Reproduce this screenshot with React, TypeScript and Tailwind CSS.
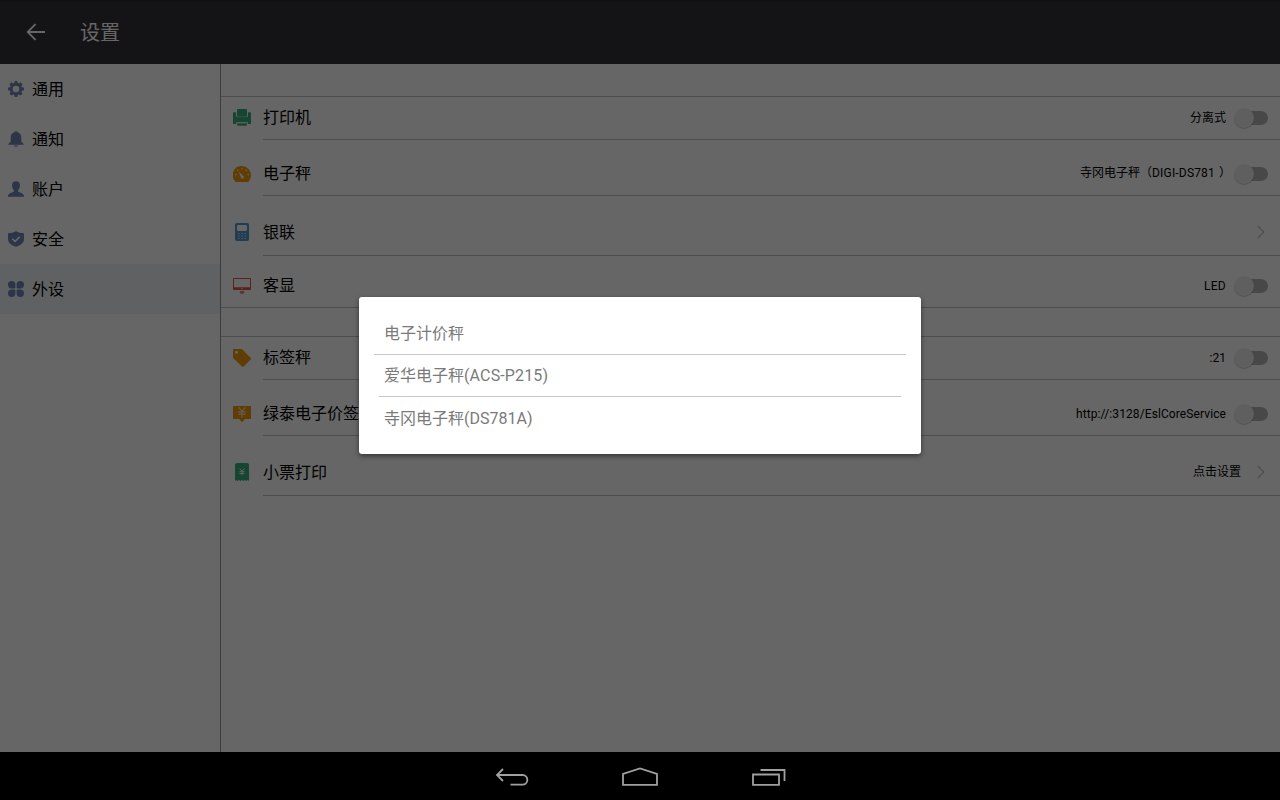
import React from "react";

const GeneralIcon = () => (
  <svg width="16" height="16" viewBox="0 0 16 16" fill="#7186b4">
    <path
      fillRule="evenodd"
      d="M6.7 0h2.6l.4 2 1.2.5 1.8-1.2 1.9 1.9-1.2 1.8.5 1.2 2.1.4v2.7l-2.1.4-.5 1.2 1.2 1.8-1.9 1.9-1.8-1.2-1.2.5-.4 2.1H6.700l-.4-2.100-1.200-.5-1.800 1.200-1.900-1.900 1.200-1.800-.5-1.200L0 9.300V6.600l2.100-.4.500-1.200-1.200-1.800 1.900-1.900 1.800 1.200 1.200-.5zM8 4.700a3.300 3.300 0 1 0 0 6.600 3.300 3.300 0 0 0 0-6.600z"
    />
  </svg>
);
const BellIcon = () => (
  <svg width="16" height="16" viewBox="0 0 16 16" fill="#7186b4">
    <path d="M7 1a1 1 0 0 1 2 0c2.700.5 4.300 2.500 4.300 5.200v4.200l2.400 2.500v.8H.3v-.8l2.400-2.500V6.200C2.700 3.500 4.300 1.500 7 1zM5.800 14.400h4.400c-.4.900-1.200 1.400-2.200 1.400s-1.800-.5-2.200-1.400z" />
  </svg>
);
const UserIcon = () => (
  <svg width="16" height="16" viewBox="0 0 16 16" fill="#7186b4">
    <path d="M8 .2c2.500 0 4 1.600 4 3.900 0 2.200-.8 4.200-1.900 5.100v1.200c.6.900 5.900 1.900 5.900 4.200v1.200H0v-1.200c0-2.300 5.300-3.300 5.900-4.200V9.200C4.800 8.300 4 6.300 4 4.100 4 1.800 5.500.2 8 .2z" />
  </svg>
);
const ShieldIcon = () => (
  <svg width="16" height="16" viewBox="0 0 16 16">
    <path d="M8 .2c2.200 1.200 4.800 1.900 8 2v6c0 3.700-3.400 5.900-8 7.600C3.400 14.100 0 11.900 0 8.200v-6c3.200-.1 5.800-.8 8-2z" fill="#7186b4" />
    <path d="M4.300 7.800l2.700 2.600 4.700-4.500" fill="none" stroke="#fff" strokeWidth="1.500" />
  </svg>
);
const DevicesIcon = () => (
  <svg width="16" height="16" viewBox="0 0 16 16" fill="#7186b4">
    <path d="M3.700 0a3.700 3.700 0 0 1 3.700 3.700v2.500c0 .8-.4 1.200-1.200 1.200H3.700A3.700 3.700 0 0 1 3.700 0zM12.300 0a3.700 3.700 0 0 1 0 7.400H9.800c-.8 0-1.200-.4-1.200-1.200V3.700A3.700 3.700 0 0 1 12.300 0zM3.700 8.600h2.500c.8 0 1.200.4 1.200 1.200v2.500a3.700 3.700 0 1 1-3.700-3.700zM9.800 8.600h2.500a3.700 3.700 0 1 1-3.700 3.700V9.800c0-.8.4-1.200 1.200-1.200z" />
  </svg>
);

const PrinterIcon = () => (
  <svg width="18" height="18" viewBox="0 0 18 18">
    <path d="M1 3.200h1.200c.6 0 1 .4 1 1V7.500h11.600V4.200c0-.6.4-1 1-1H17c.6 0 1 .4 1 1V14c0 .6-.4 1-1 1h-2.200v-1.800H3.200V15H1c-.6 0-1-.4-1-1V4.200c0-.6.4-1 1-1z" fill="#3aad82" />
    <path d="M5 0h8c.6 0 1 .4 1 1v6c0 .5-.4.900-.9.900H4.900A.9.900 0 0 1 4 7V1c0-.6.400-1 1-1z" fill="#3aad82" />
    <path d="M4 14.200h10V15.600c0 .7-.5 1.200-1.200 1.200H5.200c-.7 0-1.200-.5-1.200-1.200z" fill="#3aad82" />
    <path d="M3.600 3.500v4.300h10.800V3.500M3.200 13.600h11.600" fill="none" stroke="#fff" strokeOpacity=".55" strokeWidth=".7" />
  </svg>
);
const GaugeIcon = () => (
  <svg width="18" height="18" viewBox="0 0 18 18">
    <path d="M9 1a9 9 0 0 1 9 9c0 2.600-.8 4.700-2.300 6.400-.4.400-.8.600-1.400.6H3.700c-.6 0-1-.2-1.400-.6A9 9 0 0 1 9 1z" fill="#f29a11" />
    <path d="M5.700 6.800l4.500 4.200a1.400 1.400 0 1 1-2.200 1.400z" fill="#fff" />
    <g fill="#fff" fillOpacity=".85">
      <circle cx="9" cy="3.700" r=".8" />
      <circle cx="4.700" cy="5.400" r=".8" />
      <circle cx="13.300" cy="5.400" r=".8" />
      <circle cx="2.800" cy="9.600" r=".8" />
      <circle cx="15.200" cy="9.600" r=".8" />
    </g>
  </svg>
);
const TerminalIcon = () => (
  <svg width="18" height="18" viewBox="0 0 18 18">
    <rect x="2" y="0" width="14" height="18" rx="2" fill="#529acd" />
    <rect x="4" y="2" width="10" height="6" rx="1.200" fill="#fff" />
    <g fill="#fff" fillOpacity=".7">
      <path d="M5 10h1.500v1H5zM8.250 10h1.500v1h-1.500zM11.500 10H13v1h-1.500zM5 12.500h1.500v1H5zM8.250 12.500h1.500v1h-1.500zM11.500 12.500H13v1h-1.500zM5 15h1.500v1H5zM8.250 15h1.500v1h-1.500zM11.500 15H13v1h-1.500z" />
    </g>
  </svg>
);
const MonitorIcon = () => (
  <svg width="18" height="18" viewBox="0 0 18 18" fill="#dc5946">
    <path fillRule="evenodd" d="M.8 1h16.400c.5 0 .8.300.8.800v10.400c0 .5-.3.800-.8.800H.8c-.5 0-.8-.3-.8-.8V1.800C0 1.300.3 1 .8 1zM1 2v8.300h16V2zM8.300 11.200h1.400v.9H8.300z" />
    <path d="M6.800 14.200h4.400v1.400H6.800z" />
    <path d="M7.200 15.600h3.600v1.200H7.200z" fillOpacity=".7" />
  </svg>
);
const TagIcon = () => (
  <svg width="18" height="18" viewBox="0 0 18 18" fill="#f29a11">
    <path fillRule="evenodd" d="M1 0h7.300c.4 0 .7.100 1 .4l8.300 8.300c.6.600.6 1.200 0 1.800l-6.800 6.900c-.6.600-1.200.6-1.800 0L.4 9.300A1.300 1.300 0 0 1 0 8.300V1c0-.6.4-1 1-1zm2.500 1.700a1.500 1.500 0 1 0 0 3 1.500 1.500 0 0 0 0-3z" />
  </svg>
);
const PriceIcon = () => (
  <svg width="18" height="18" viewBox="0 0 18 18">
    <path d="M0 1h18v13h-6.200L9 17.200 6.200 14H0z" fill="#f29a11" />
    <path d="M5.800 2.500L9 6.300l3.200-3.800M9 6.300v6.500M5.300 7h7.400M5.300 9.400h7.400" fill="none" stroke="#f5deb8" strokeWidth="1.300" />
  </svg>
);
const ReceiptIcon = () => (
  <svg width="18" height="18" viewBox="0 0 18 18">
    <path d="M4 0h10c1.200 0 2 .8 2 2v16l-1.200-1-1.300 1-1.500-1-1.500 1L9 17l-1.500 1L6 17l-1.500 1-1.300-1L2 18V2C2 .8 2.800 0 4 0z" fill="#3aad82" />
    <path d="M6.700 5.500L9 8.200l2.300-2.700M9 8.200v4M6.500 8.700h5M6.500 10.500h5" fill="none" stroke="#e4f4ee" strokeWidth="1" />
  </svg>
);

const Toggle = () => (
  <span className="relative block h-[22px] w-[34px]">
    <span className="absolute top-1 right-0 h-3.5 w-[28px] rounded-full bg-[#b5b5b5]" />
    <span className="absolute top-[1px] left-0 h-5 w-5 rounded-full bg-[#eeeeee] shadow-[0_1px_1px_rgba(0,0,0,0.2)]" />
  </span>
);
const Chevron = () => (
  <svg width="8" height="14" viewBox="0 0 8 14" fill="none" stroke="#bebebe" strokeWidth="1.100">
    <path d="M.8 1l6 6-6 6" />
  </svg>
);

const menu = [
  { label: "通用", icon: <GeneralIcon /> },
  { label: "通知", icon: <BellIcon /> },
  { label: "账户", icon: <UserIcon /> },
  { label: "安全", icon: <ShieldIcon /> },
  { label: "外设", icon: <DevicesIcon />, active: true },
];

type RowProps = {
  icon: React.ReactNode;
  label: string;
  value?: React.ReactNode;
  size: string;
  shift?: string;
  valueShift?: string;
  link?: boolean;
  full?: boolean;
};

function Row({ icon, label, value, size, shift = "pt-px", valueShift = "pb-px", link, full }: RowProps) {
  return (
    <div className={`flex pl-3 ${size} ${full ? "border-b border-[#c3c3c3]" : ""}`}>
      <div className="flex w-[30px] shrink-0 items-center">{icon}</div>
      <div className="flex flex-1 items-center">
        <span className={`flex-1 text-base leading-5 ${shift}`}>{label}</span>
        {value && (
          <span className={`text-xs leading-4 whitespace-pre ${valueShift} ${link ? "mr-4" : "mr-2"}`}>{value}</span>
        )}
        <span className={link ? "mr-[15px]" : "mr-3"}>{link ? <Chevron /> : <Toggle />}</span>
      </div>
    </div>
  );
}

const Line = () => <div className="ml-[42px] h-px bg-[#c3c3c3]" />;

const scaleModel = (
  <>
    （<span className="tracking-[0.015em]">DIGI-DS781</span>
    <span className="-mr-[5px] ml-1">）</span>
  </>
);

export default function App() {
  return (
    <div className="relative flex h-[800px] w-[1280px] flex-col overflow-hidden bg-white font-['Roboto','Noto_Sans_CJK_SC',sans-serif] text-black">
      <header className="flex h-16 shrink-0 items-center border-t-2 border-[#2a2a2d] bg-[#333338] pb-0.5 pl-[26px] text-white">
        <svg width="20" height="18" viewBox="0 0 20 18" fill="none" stroke="#fff" strokeWidth="1.800">
          <path d="M19 9H2M9.500 1.200L1.700 9l7.800 7.800" />
        </svg>
        <h1 className="ml-[34px] pt-0.5 text-[20px] leading-6">设置</h1>
      </header>

      <main className="flex min-h-0 flex-1">
        <nav className="w-[221px] shrink-0 border-r border-[#999]">
          {menu.map((m) => (
            <div key={m.label} className={`flex h-[50px] items-center gap-2 pl-2 ${m.active ? "bg-[#f0f3f6]" : ""}`}>
              {m.icon}
              <span className="pt-0.5 text-base leading-5">{m.label}</span>
            </div>
          ))}
        </nav>

        <section className="flex-1">
          <div className="h-8" />
          <div className="h-px bg-[#c3c3c3]" />
          <Row icon={<PrinterIcon />} label="打印机" value="分离式" size="h-[42px]" shift="pb-px" />
          <Line />
          <Row
            icon={<GaugeIcon />}
            label="电子秤"
            value={<>寺冈电子秤{scaleModel}</>}
            size="h-[55px] pt-3"
          />
          <Line />
          <Row icon={<TerminalIcon />} label="银联" size="h-[59px] pt-3" shift="pt-[3px]" link />
          <Line />
          <Row
            icon={<MonitorIcon />}
            label="客显"
            value={<span className="tracking-[0.02em]">LED</span>}
            size="h-[52px] pt-2"
            valueShift="pt-px"
            full
          />
          <div className="h-7" />
          <div className="h-px bg-[#c3c3c3]" />
          <Row icon={<TagIcon />} label="标签秤" value=":21" size="h-[42px]" shift="pb-px" />
          <Line />
          <Row
            icon={<PriceIcon />}
            label="绿泰电子价签"
            value={<span className="tracking-[0.008em]">http://:3128/EslCoreService</span>}
            valueShift="pt-px"
            size="h-[55px] pt-3"
          />
          <Line />
          <Row icon={<ReceiptIcon />} label="小票打印" value="点击设置" size="h-[59px] pt-3" shift="pt-[3px]" valueShift="pt-px" link />
          <Line />
        </section>
      </main>

      <footer className="flex h-12 shrink-0 items-center justify-center bg-black">
        <svg width="320" height="48" viewBox="0 0 320 48" fill="none" stroke="#a0a0a0" strokeWidth="1.800">
          <path d="M17 23h25.500a4.800 4.800 0 0 1 0 9.700H30.500M23 17l-6 6 6 6" />
          <path d="M143 32.800V22l17-5.500L177 22v10.800z" />
          <path d="M273 22.500h26v10.300h-26zM280.500 18h24v11" />
        </svg>
      </footer>

      <div className="absolute inset-x-0 top-0 flex h-[752px] justify-center bg-black/60">
        <div className="mt-[297px] h-[157px] w-[562px] rounded-[3px] bg-white px-[15px] pt-[15px] text-base leading-5 text-[#7a7a7a] shadow-[0_2px_5px_rgba(0,0,0,0.5)]">
          <div className="flex h-[43px] items-center border-b border-[#c8c8c8] pt-0.5 pl-2.5">电子计价秤</div>
          <div className="mx-[5px] flex h-[42px] items-center border-b border-[#c8c8c8] pl-[5px]">
            爱华电子秤<span className="tracking-[0.008em]">(ACS-P215)</span>
          </div>
          <div className="flex h-[43px] items-center pl-2.5">寺冈电子秤(DS781A)</div>
        </div>
      </div>
    </div>
  );
}
